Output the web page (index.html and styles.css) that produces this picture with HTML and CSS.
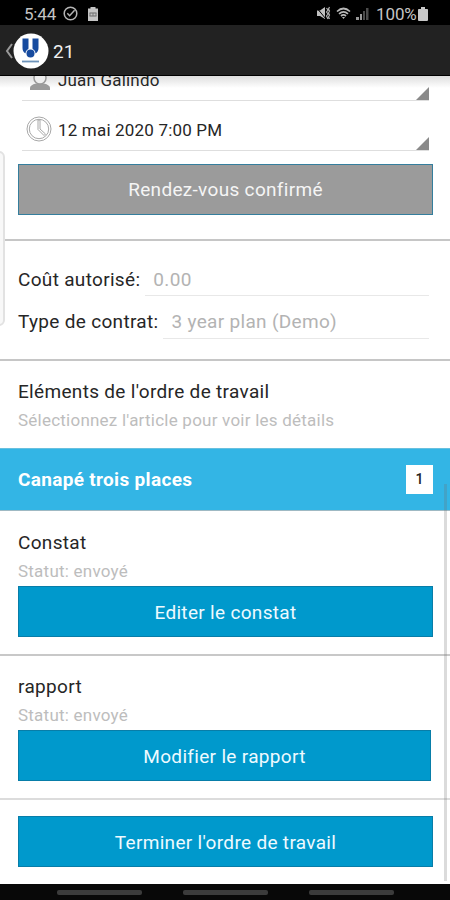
FILE: index.html
```html
<!DOCTYPE html>
<html lang="fr">
<head>
<meta charset="utf-8">
<title>21</title>
<link rel="stylesheet" href="styles.css">
</head>
<body>
<div class="phone">
  <div class="status">
    <span class="time">5:44</span>
    <svg class="s-check" width="15" height="15" viewBox="0 0 15 15" fill="none" stroke="#b5b5b5" stroke-width="1.5"><circle cx="7.5" cy="7.5" r="6.3"/><path d="M4.3 7.3l2.3 2.4 5-5.4"/></svg>
    <svg class="s-clip" width="12" height="16" viewBox="0 0 12 16"><path d="M1 2.5h2.500V1h5v1.500H11V15H1z" fill="#c4c4c4"/><path d="M2.500 7h7M2.500 10h7" stroke="#666" stroke-width="1"/><path d="M3 7v3M6 7v3M9 7v3" stroke="#777" stroke-width="1"/></svg>
    <span class="spacer"></span>
    <svg class="s-mute" width="15" height="15" viewBox="0 0 15 15"><path d="M1 4.500h3L9 1v12L4 10H1z" fill="#c0c0c0"/><path d="M0 1l10 12" stroke="#000" stroke-width="1"/><path d="M10.500 2l1.500 2-1.500 2 1.500 2-1.500 2 1.500 3M13.500 1l-1 2 1 2-1 2 1 2-1 2 1 2" fill="none" stroke="#b0b0b0" stroke-width="1.200"/></svg>
    <svg class="s-wifi" width="15" height="13" viewBox="0 0 15 13" fill="none" stroke="#b8b8b8" stroke-width="1.700"><path d="M1 4.500Q7.500-1.500 14 4.500M3 6.800Q7.500 2.800 12 6.800M5 9Q7.500 6.800 10 9"/><path d="M6 10h3l-1.500 2z" fill="#b8b8b8" stroke="none"/></svg>
    <svg class="s-signal" width="13" height="13" viewBox="0 0 13 13"><path d="M0 13v-3h3v3zM4 13V7h2v6z" fill="#999"/><path d="M7 13V4h2v9zM10 13V1h2.500v12z" fill="#4b4b4b"/></svg>
    <span class="pct">100%</span>
    <svg width="10" height="14" viewBox="0 0 10 14"><path d="M0 2.500Q0 2 1 2h2V0h4v2h2q1 0 1 .5V13q0 1-1 1H1q-1 0-1-1z" fill="#c8c8c8"/></svg>
  </div>
  <header class="appbar">
    <svg class="back" width="8" height="18" viewBox="0 0 8 18" fill="none" stroke="#999" stroke-width="2"><path d="M7 2L2 9l5 7"/></svg>
    <svg class="logo" width="36" height="36" viewBox="0 0 36 36"><circle cx="18" cy="18" r="17.500" fill="#fff"/><path d="M9.500 5.500h6v11.500l-3 3.500q-3-2-3-5.500zM19.500 5.500h6v9.500q0 3.500-3 5.500l-3-3.500z" fill="#174b9f"/><circle cx="17.500" cy="20.500" r="5" fill="#fff"/><circle cx="17.500" cy="20.500" r="4" fill="#174b9f"/><path d="M9 28.500h17" stroke="#6d93ba" stroke-width="1.800"/></svg>
    <h1>21</h1>
  </header>
  <main>
    <section class="appointment">
      <div class="spinner person">
        <svg width="20" height="24" viewBox="0 0 20 24"><path d="M0 24v-2q0-3 6-4.500h8q6 1.500 6 4.500v2z" fill="#9b9b9b"/><circle cx="10" cy="12" r="6" fill="#eee" stroke="#999" stroke-width="1.500"/></svg>
        <span class="t name">Juan Galindo</span><i class="corner"></i>
      </div>
      <div class="spinner date">
        <svg width="26" height="26" viewBox="0 0 26 26" fill="none" stroke="#a8a8a8" stroke-width="1"><circle cx="13" cy="13" r="12"/><circle cx="13" cy="13" r="9.700"/><path d="M12 4v9.500l6 6 1.500-1.500-5.500-5V4z"/></svg>
        <span class="t when">12 mai 2020 7:00 PM</span><i class="corner"></i>
      </div>
      <button class="btn confirmed"><span class="t">Rendez-vous confirmé</span></button>
    </section>
    <section class="terms">
      <div class="field cost"><label class="t">Coût autorisé:</label><span class="value"><span class="t">0.00</span></span></div>
      <div class="field contract"><label class="t">Type de contrat:</label><span class="value"><span class="t">3 year plan (Demo)</span></span></div>
    </section>
    <section class="items">
      <h2><span class="t">Eléments de l'ordre de travail</span></h2>
      <p><span class="t st">Sélectionnez l'article pour voir les détails</span></p>
    </section>
    <div class="item"><span class="t">Canapé trois places</span><span class="count">1</span></div>
    <section class="step first">
      <h2><span class="t">Constat</span></h2>
      <p><span class="t st">Statut: envoyé</span></p>
      <button class="btn"><span class="t">Editer le constat</span></button>
    </section>
    <section class="step second">
      <h2><span class="t">rapport</span></h2>
      <p><span class="t st">Statut: envoyé</span></p>
      <button class="btn"><span class="t">Modifier le rapport</span></button>
    </section>
    <section class="finish"><button class="btn"><span class="t">Terminer l'ordre de travail</span></button></section>
    <i class="edge"></i><i class="scroll"></i>
  </main>
  <nav><i></i><i></i><i></i></nav>
</div>
</body>
</html>
```
FILE: styles.css
```css
* { box-sizing: border-box; margin: 0; padding: 0; }
body { font-family: Roboto, sans-serif; background: #fff; color: #262626; }
.phone { width: 450px; height: 900px; display: flex; flex-direction: column; overflow: hidden; }
svg { display: block; flex: none; }
.t { display: inline-block; white-space: nowrap; flex: none; font-size: 19px; letter-spacing: .32px; }
.status { height: 25px; flex: none; background: #000; color: #c4c4c4; display: flex; align-items: center; padding: 2px 22px 0 24px; font-size: 17px; }
.time { width: 39px; letter-spacing: -.2px; }
.s-clip { margin-left: 9px; }
.spacer { flex: 1; }
.s-wifi { margin-left: 5px; }
.s-signal { margin: 0 7px 0 5px; }
.pct { width: 42px; white-space: nowrap; letter-spacing: -.1px; }
.appbar { height: 51px; flex: none; background: #222; border-bottom: 1px solid #000; display: flex; align-items: center; padding-left: 5px; padding-top: 3px; }
.appbar svg { margin-top: -1px; }
.appbar h1 { color: #f0f0f0; font-size: 19px; font-weight: 400; margin-left: 4px; }
main { height: 808px; flex: none; position: relative; overflow: hidden; background: linear-gradient(#dedede, #fff 12px); }
.appointment { height: 165px; border-bottom: 2px solid #c6c6c6; padding: 0 17px 0 18px; }
.spinner { display: flex; align-items: center; position: relative; margin: 0 4px; border-bottom: 1px solid #dedede; }
.person { height: 25px; padding-left: 8px; }
.person svg { margin-top: -20px; }
.name { margin-left: 8px; margin-top: -16px; }
.date { height: 50px; padding-left: 4px; }
.date svg { margin-top: 7px; }
.when { margin-left: 6px; margin-top: 9px; }
.name, .when { font-size: 17px; letter-spacing: .18px; }
.corner { position: absolute; right: 0; bottom: 0; width: 13px; height: 13px; background: #8a8a8a; clip-path: polygon(100% 0, 100% 100%, 0 100%); }
.btn { display: flex; align-items: center; justify-content: center; width: 415px; height: 51px; padding-top: 1px; border: 1px solid #087da8; background: #0099cc; color: #eefaff; font-family: inherit; }
.confirmed { background: #9b9b9b; border-color: #347e9d; color: #f5f5f5; margin-top: 13px; padding-top: 0; }
.terms { height: 120px; border-bottom: 2px solid #c6c6c6; padding: 24px 21px 0 18px; }
.field { display: flex; height: 42px; align-items: flex-start; }
.field label { line-height: 30px; }
.value { flex: 1; height: 31px; line-height: 30px; border-bottom: 1px solid #e8e8e8; color: #b3b3b3; padding-left: 8px; margin-left: 5px; }
.contract .value { height: 32px; }
.value .t, h2 .t, p .t { display: block; }
.items { height: 87px; padding: 15px 18px 0; }
h2 { height: 30px; line-height: 31px; font-weight: 400; }
p { height: 29px; line-height: 28px; color: #bdbdbd; }
.item { height: 63px; background: #33b5e5; color: #fff; display: flex; justify-content: space-between; align-items: center; padding: 0 17px 0 18px; font-weight: 700; border-bottom: 1px solid #9fb9c3; border-top: 1px solid #68c0df; }
.count { width: 27px; height: 29px; margin-top: -1px; background: #fff; color: #222; font-size: 14px; font-weight: 500; display: flex; align-items: center; justify-content: center; }
.step { padding: 17px 17px 0 18px; height: 145px; border-bottom: 2px solid #c8c8c8; }
.second { height: 144px; padding-top: 16px; border-bottom-color: #dcdcdc; }
.step h2 { height: 29px; line-height: 30px; }
.second .btn { width: 413px; }
.finish { padding: 16px 17px 0 18px; }
.edge { position: absolute; left: -10px; top: 75px; width: 15px; height: 175px; border: 2px solid #e2e2e2; border-radius: 6px; background: #f8f8f8; }
.scroll { position: absolute; right: 3px; top: 408px; width: 3px; height: 397px; background: rgba(110,110,110,.25); }
nav { height: 16px; flex: none; background: #080808; display: flex; justify-content: center; gap: 41px; padding-top: 6px; }
nav i { width: 85px; height: 5px; border-radius: 2px; background: #3b3b3b; }
.st { font-size: 17px; letter-spacing: .23px; }
```
